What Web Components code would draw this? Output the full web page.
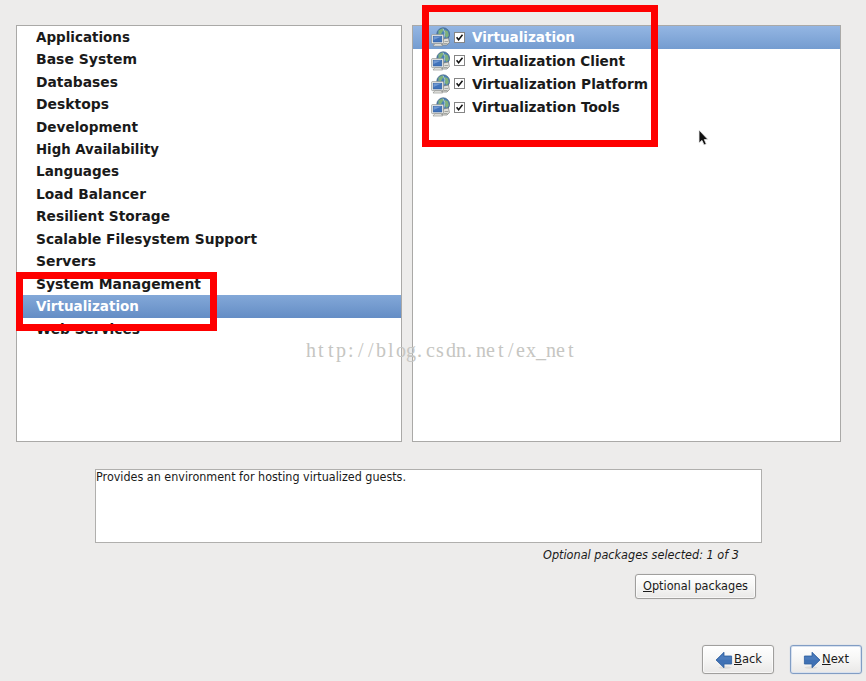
<!DOCTYPE html>
<html lang="en">
<head>
<meta charset="utf-8">
<title>Package groups</title>
<style>
    body {
        margin: 0;
        width: 866px;
        height: 681px;
        overflow: hidden;
        background: #edeceb;
        color: #1a1a1a;
        font-family: "DejaVu Sans", sans-serif;
    }
</style>
</head>
<body>
<package-screen></package-screen>

<script>
// Text drawn at a fixed width, like the installer's hinted fonts
class FitLabel extends HTMLElement {
    connectedCallback() {
        if (!this.shadowRoot) {
            this.attachShadow({mode: 'open'});
            this.shadowRoot.innerHTML = `
                <style>
                    :host { display: inline-block; white-space: nowrap; }
                    span { display: inline-block; transform-origin: 0 50%; }
                </style>
                <span><slot></slot></span>
            `;
        }
        const fit = Number(this.getAttribute('fit'));
        const span = this.shadowRoot.querySelector('span');
        if (fit) {
            span.style.transform = `scaleX(${fit / span.getBoundingClientRect().width})`;
            this.style.width = fit + 'px';
        }
    }
}
window.customElements.define('fit-label', FitLabel);

class ListPanel extends HTMLElement {
    constructor() {
        super();
        this.attachShadow({mode: 'open'});
        this.shadowRoot.innerHTML = `
            <style>
                :host {
                    display: block;
                    box-sizing: border-box;
                    border: 1px solid #aaa9a7;
                    background: #fff;
                }
            </style>
            <slot></slot>
        `;
    }
}
window.customElements.define('list-panel', ListPanel);

class ListRow extends HTMLElement {
    constructor() {
        super();
        this.attachShadow({mode: 'open'});
        this.shadowRoot.innerHTML = `
            <style>
                :host {
                    display: flex;
                    align-items: center;
                    box-sizing: border-box;
                    height: 22.46px;
                    padding: 0 0 1px 19px;
                    font-size: 14.2px;
                    font-weight: bold;
                    line-height: 20px;
                }
                :host([selected]) {
                    color: #fff;
                    background: linear-gradient(#83a8d8, #648dc5);
                }
            </style>
            <slot></slot>
        `;
    }
}
window.customElements.define('list-row', ListRow);

class GroupRow extends HTMLElement {
    constructor() {
        super();
        this.attachShadow({mode: 'open'});
        this.shadowRoot.innerHTML = `
            <style>
                :host {
                    display: flex;
                    align-items: center;
                    box-sizing: border-box;
                    height: 23.4px;
                    padding: 0 0 1px 18px;
                    font-size: 14.2px;
                    font-weight: bold;
                    line-height: 20px;
                }
                :host([selected]) {
                    color: #fff;
                    background: linear-gradient(#94b6e3, #749cd0);
                }
                .icon { width: 19px; height: 20px; margin-right: 4px; }
                .check { width: 11px; height: 11px; margin-right: 7px; }
            </style>
            <svg class="icon" viewBox="0 0 19 20">
                <circle cx="12.2" cy="7.2" r="6.4" fill="#4a80b4" stroke="#3f5f80" stroke-width=".7"/>
                <path d="M7.5 3.5l3.5-2 2 1-1.5 2-1.5 2.5-2.6.5zM14 3l3 1.5.8 4-2 2.4-2-2.2.6-2.5-1.6-2z" fill="#7fb07a"/>
                <path d="M12 1.5q3.2 4 1 9" fill="none" stroke="#c6dbe8" stroke-width=".7"/>
                <path d="M12.5 12l5-1 .9 4.5-2.4 2.5h-5z" fill="#dfe0dc" stroke="#777975" stroke-width=".7"/>
                <path d="M13.5 14.5h3.6M12.5 16.5h4" stroke="#8a8c88" stroke-width=".7"/>
                <path d="M4 16.6h6l1.6 2.4H2z" fill="#e8e8e4" stroke="#858783" stroke-width=".6"/>
                <rect x=".6" y="7.6" width="11.8" height="9" rx=".8" fill="#f0f0ec" stroke="#8b8e8c" stroke-width=".7"/>
                <rect x="2.2" y="9.2" width="8.6" height="5.8" fill="#4173bb" stroke="#2f5c9c" stroke-width=".6"/>
                <path d="M2.6 9.6h7.8L2.6 13z" fill="#6f98d2"/>
            </svg>
            <svg class="check" viewBox="0 0 11 11">
                <rect x=".5" y=".5" width="10" height="10" fill="#fff" stroke="#858585"/>
                <path d="M2.6 5.2L4.6 7.8 8.5 2.8" fill="none" stroke="#111" stroke-width="1.5"/>
            </svg>
            <slot></slot>
        `;
    }
}
window.customElements.define('group-row', GroupRow);

class PushButton extends HTMLElement {
    constructor() {
        super();
        this.attachShadow({mode: 'open'});
        this.shadowRoot.innerHTML = `
            <style>
                :host {
                    display: flex;
                    align-items: center;
                    justify-content: center;
                    box-sizing: border-box;
                    padding-bottom: 1px;
                    border: 1px solid #a09f9d;
                    border-radius: 3px;
                    background: linear-gradient(#fff, #f7f7f6 45%, #e9e8e7);
                    box-shadow: inset 0 0 0 1px rgba(255, 255, 255, .6), 0 0 1px #c4c3c1;
                    font-size: 12.4px;
                    line-height: 16px;
                }
                :host([focused]) {
                    border-color: #819dc4;
                    box-shadow: inset 0 0 0 1px #d7e1ef, 0 0 1px #9db3d4;
                }
            </style>
            <slot></slot>
        `;
    }
}
window.customElements.define('push-button', PushButton);

class ArrowIcon extends HTMLElement {
    constructor() {
        super();
        this.attachShadow({mode: 'open'});
        this.shadowRoot.innerHTML = `
            <style>
                :host { display: block; width: 18px; height: 18px; }
                :host([right]) svg { transform: scaleX(-1); }
                svg { display: block; }
            </style>
            <svg width="18" height="18" viewBox="0 0 18 18">
                <ellipse cx="10" cy="16.6" rx="6.5" ry="1.3" fill="#dddcda"/>
                <path d="M1 9L9 1.2V5h7.6v8H9v3.8z" fill="#3f71b4" stroke="#2f5f9f" stroke-width=".8" stroke-linejoin="round"/>
                <path d="M2.6 8.7L8.3 3v2.8h7.6v2.9z" fill="#5583c2" opacity=".6"/>
            </svg>
        `;
    }
}
window.customElements.define('arrow-icon', ArrowIcon);

class MarkBox extends HTMLElement {
    constructor() {
        super();
        this.attachShadow({mode: 'open'});
        this.shadowRoot.innerHTML = `
            <style>
                :host {
                    display: block;
                    position: absolute;
                    box-sizing: border-box;
                    border: 7px solid #fe0000;
                }
            </style>
        `;
    }
}
window.customElements.define('mark-box', MarkBox);

class WaterMark extends HTMLElement {
    constructor() {
        super();
        this.attachShadow({mode: 'open'});
        const text = 'http://blog.csdn.net/ex_net';
        // one 10px cell per character
        const xs = [...text].map((c, i) => i * 10 + ('/tli:'.includes(c) ? 2 : c === '.' ? 1 : 0));
        this.shadowRoot.innerHTML = `
            <style>
                :host { display: block; position: absolute; }
                svg { display: block; }
                text { font: 20px "Liberation Serif", serif; fill: #c6c6c2; }
            </style>
            <svg width="272" height="26"><text x="${xs.join(' ')}" y="18">${text}</text></svg>
        `;
    }
}
window.customElements.define('water-mark', WaterMark);

const categories = [
    ['Applications', 94], ['Base System', 101], ['Databases', 82], ['Desktops', 73],
    ['Development', 102], ['High Availability', 123], ['Languages', 83],
    ['Load Balancer', 110], ['Resilient Storage', 134],
    ['Scalable Filesystem Support', 221], ['Servers', 60],
    ['System Management', 165], ['Virtualization', 103], ['Web Services', 104]
];

const groups = [
    ['Virtualization', 103], ['Virtualization Client', 153],
    ['Virtualization Platform', 176], ['Virtualization Tools', 148]
];

class PackageScreen extends HTMLElement {
    constructor() {
        super();
        this.attachShadow({mode: 'open'});
        this.shadowRoot.innerHTML = `
            <style>
                :host {
                    display: flex;
                    flex-direction: column;
                    position: relative;
                    box-sizing: border-box;
                    width: 866px;
                    height: 681px;
                    padding: 25px 4px 0 16px;
                }
                .lists {
                    display: grid;
                    grid-template-columns: 386px 429px;
                    gap: 10px;
                    height: 417px;
                }
                .description {
                    box-sizing: border-box;
                    width: 667px;
                    height: 74px;
                    margin: 27px 0 0 79px;
                    border: 1px solid #b0afad;
                    background: #fff;
                    font-size: 12.4px;
                    line-height: 14px;
                }
                .selected {
                    align-self: flex-end;
                    margin: 4px 123px 0 0;
                    font-size: 12.4px;
                    font-style: italic;
                    line-height: 16px;
                }
                .optional { align-self: flex-end; width: 121px; height: 25px; margin: 11px 106px 0 0; }
                .nav {
                    display: flex;
                    justify-content: flex-end;
                    gap: 16px;
                    margin-top: 46px;
                }
                .nav push-button { width: 72px; height: 29px; }
                .arrow { margin: 1px 1px 0 0; }
                .mark-groups { left: 422px; top: 5px; width: 236px; height: 142px; }
                .mark-category { left: 16px; top: 272px; width: 201px; height: 59px; }
                water-mark { left: 306px; top: 339px; }
                .pointer { position: absolute; left: 698px; top: 129px; }
            </style>
            <div class="lists">
                <list-panel>${categories.map(([name, w], i) => `<list-row ${i === 12 ? 'selected' : ''}><fit-label fit="${w}">${name}</fit-label></list-row>`).join('')}</list-panel>
                <list-panel>${groups.map(([name, w], i) => `<group-row ${i === 0 ? 'selected' : ''}><fit-label fit="${w}">${name}</fit-label></group-row>`).join('')}</list-panel>
            </div>
            <div class="description"><fit-label fit="310">Provides an environment for hosting virtualized guests.</fit-label></div>
            <div class="selected"><fit-label fit="196">Optional packages selected: 1 of 3</fit-label></div>
            <push-button class="optional"><fit-label fit="105"><u>O</u>ptional packages</fit-label></push-button>
            <div class="nav">
                <push-button><arrow-icon class="arrow"></arrow-icon><fit-label fit="28"><u>B</u>ack</fit-label></push-button>
                <push-button focused><arrow-icon class="arrow" right></arrow-icon><fit-label fit="27"><u>N</u>ext</fit-label></push-button>
            </div>
            <mark-box class="mark-groups"></mark-box>
            <mark-box class="mark-category"></mark-box>
            <water-mark></water-mark>
            <svg class="pointer" width="12" height="18" viewBox="0 0 12 18">
                <path d="M1 1v13l3-2.6 2 4.6 2.3-1-2-4.4H10z" fill="#111" stroke="#eee" stroke-width=".8"/>
            </svg>
        `;
    }
}
window.customElements.define('package-screen', PackageScreen);
</script>
</body>
</html>
